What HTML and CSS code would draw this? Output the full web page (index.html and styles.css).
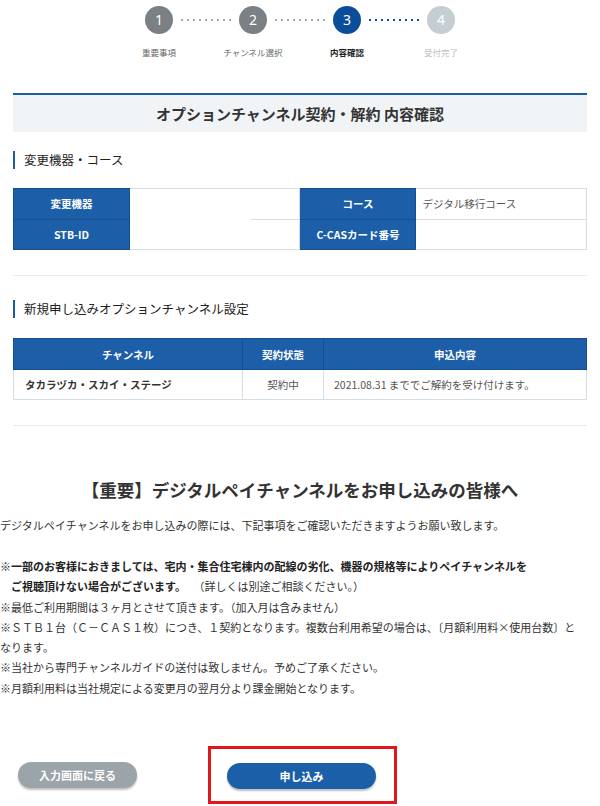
FILE: index.html
```html
<!DOCTYPE html>
<html lang="ja">
<head>
    <meta charset="UTF-8">
    <meta name="viewport" content="width=device-width, initial-scale=1.0">
    <title>内容確認</title>
    <link rel="stylesheet" href="styles.css">
</head>
<body>
    <ol class="steps">
        <li class="step done"><span class="num">1</span><span class="label">重要事項</span></li>
        <li class="step done"><span class="num">2</span><span class="label">チャンネル選択</span></li>
        <li class="step current"><span class="num">3</span><span class="label">内容確認</span></li>
        <li class="step todo"><span class="num">4</span><span class="label">受付完了</span></li>
    </ol>

    <h1 class="page-title">オプションチャンネル契約・解約 内容確認</h1>

    <section class="block">
        <h2 class="sub-title">変更機器・コース</h2>
        <table class="info-table device">
            <tr>
                <th>変更機器</th>
                <td class="no-bottom"></td>
                <th>コース</th>
                <td>デジタル移行コース</td>
            </tr>
            <tr>
                <th>STB-ID</th>
                <td class="partial-line"></td>
                <th>C-CASカード番号</th>
                <td></td>
            </tr>
        </table>
    </section>

    <section class="block">
        <h2 class="sub-title">新規申し込みオプションチャンネル設定</h2>
        <table class="info-table channels">
            <tr>
                <th class="col-name">チャンネル</th>
                <th class="col-state">契約状態</th>
                <th>申込内容</th>
            </tr>
            <tr>
                <td class="ch-name">タカラヅカ・スカイ・ステージ</td>
                <td class="center">契約中</td>
                <td>2021.08.31 まででご解約を受け付けます。</td>
            </tr>
        </table>
    </section>

    <div class="notice">
        <h3>【重要】デジタルペイチャンネルをお申し込みの皆様へ</h3>
        <p class="lead">デジタルペイチャンネルをお申し込みの際には、下記事項をご確認いただきますようお願い致します。</p>
        <p class="notes">
            <strong>※一部のお客様におきましては、宅内・集合住宅棟内の配線の劣化、機器の規格等によりペイチャンネルを<br>　ご視聴頂けない場合がございます。</strong><span class="aside">（詳しくは別途ご相談ください。）</span><br>
            ※最低ご利用期間は３ヶ月とさせて頂きます。（加入月は含みません）<br>
            ※ＳＴＢ１台（Ｃ－ＣＡＳ１枚）につき、１契約となります。複数台利用希望の場合は、〔月額利用料×使用台数〕となります。<br>
            ※当社から専門チャンネルガイドの送付は致しません。予めご了承ください。<br>
            ※月額利用料は当社規定による変更月の翌月分より課金開始となります。
        </p>
    </div>

    <div class="actions">
        <button type="button" class="btn btn-back">入力画面に戻る</button>
        <div class="highlight">
            <button type="submit" class="btn btn-submit">申し込み</button>
        </div>
    </div>
</body>
</html>
```

FILE: styles.css
```css
body {
    margin: 0;
    font-family: "Noto Sans CJK JP", "Noto Sans", sans-serif;
    color: #333;
    background: #fff;
}

/* ステップ表示 */
.steps {
    display: flex;
    justify-content: center;
    list-style: none;
    margin: 0;
    padding: 6px 0 0 0;
}
.step {
    position: relative;
    width: 94px;
    display: flex;
    flex-direction: column;
    align-items: center;
}
.step .num {
    width: 28px;
    height: 28px;
    border-radius: 50%;
    color: #fff;
    font-family: "Noto Sans", sans-serif;
    font-size: 14px;
    line-height: 28px;
    text-align: center;
}
.step .label {
    margin-top: 12px;
    font-size: 8.5px;
    line-height: 12px;
    white-space: nowrap;
}
.step:not(:last-child)::after {
    content: "";
    position: absolute;
    top: 13px;
    left: calc(50% + 20px);
    width: 56px;
    height: 2px;
    background: radial-gradient(circle, #a3a9ac 0.9px, transparent 1.2px) 0 0 / 6px 2px repeat-x;
}
.step.done .num { background: #7a8083; }
.step.done .label { color: #666; }
.step.current .num { background: #0c4d9b; }
.step.current .label { color: #222; font-weight: bold; }
.step.current::after {
    background: radial-gradient(circle, #0c4d9b 1px, transparent 1.4px) 0 0 / 6px 2px repeat-x;
}
.step.todo .num { background: #c5ced3; }
.step.todo .label { color: #b8bec2; }

/* タイトル */
.page-title {
    margin: 35px 13px 0;
    height: 37px;
    line-height: 37px;
    border-top: 2px solid #1d5ba6;
    background: #f1f4f6;
    font-size: 15px;
    font-weight: bold;
    text-align: center;
    color: #333;
}

.block {
    margin: 0 13px;
    padding-bottom: 25px;
    border-bottom: 1px solid #e7ebef;
}
.sub-title {
    margin: 19px 0 0;
    padding-left: 9px;
    border-left: 2px solid #1d5ba6;
    font-size: 12.5px;
    font-weight: normal;
    line-height: 18px;
    color: #222;
}
.block + .block .sub-title {
    margin-top: 24px;
}

/* テーブル */
.info-table {
    width: 100%;
    border-collapse: collapse;
    margin-top: 21px;
    font-size: 10.5px;
}
.info-table th,
.info-table td {
    height: 30px;
    padding: 0 10px;
    border: 1px solid #d5dde5;
}
.info-table th {
    background: #1c5ea8;
    border-color: #164f8e;
    color: #fff;
    font-weight: bold;
    text-align: center;
}
.info-table td {
    color: #555;
}
.device { margin-top: 19px; }
.device th { width: 94px; }
.device td { width: 152px; padding-left: 6px; }
.device th,
.device td { height: 29.5px; }
.device td.no-bottom { border-bottom-style: hidden; }
.device td.partial-line {
    border-top-style: hidden;
    background: linear-gradient(#d5dde5, #d5dde5) no-repeat right top / 48px 1px;
}

.channels { margin-top: 20px; }
.channels .col-name { width: 208px; }
.channels .col-state { width: 60px; }
.channels td { height: 29px; }
.channels td.ch-name {
    padding-left: 11px;
    color: #333;
    font-weight: bold;
}
.channels td.center { text-align: center; }

/* 注意事項 */
.notice h3 {
    margin: 51px 0 0;
    font-size: 17.5px;
    font-weight: bold;
    line-height: 26px;
    text-align: center;
    color: #333;
}
.notice .lead {
    margin: 12px 0 0;
    font-size: 11px;
    line-height: 20px;
}
.notice .notes {
    max-width: 580px;
    margin: 21px 0 0;
    font-size: 11px;
    line-height: 20.3px;
}
.notes strong { color: #222; }
.notes .aside { margin-left: 13px; }

/* ボタン */
.actions {
    display: flex;
    align-items: center;
    margin-top: 48px;
    padding-left: 18px;
}
.btn {
    height: 26px;
    border: none;
    border-radius: 13px;
    color: #fff;
    font-family: "Noto Sans CJK JP", sans-serif;
    font-size: 11px;
    font-weight: bold;
    cursor: pointer;
    box-shadow: 0 2px 2px rgba(0, 0, 0, 0.25);
}
.btn-back {
    width: 119px;
    background: #9ba4a9;
}
.highlight {
    margin-left: 71px;
    padding: 13px 18px 12px 16px;
    border: 3px solid #e4161d;
}
.btn-submit {
    width: 149px;
    background: #1c5fa9;
}
```
